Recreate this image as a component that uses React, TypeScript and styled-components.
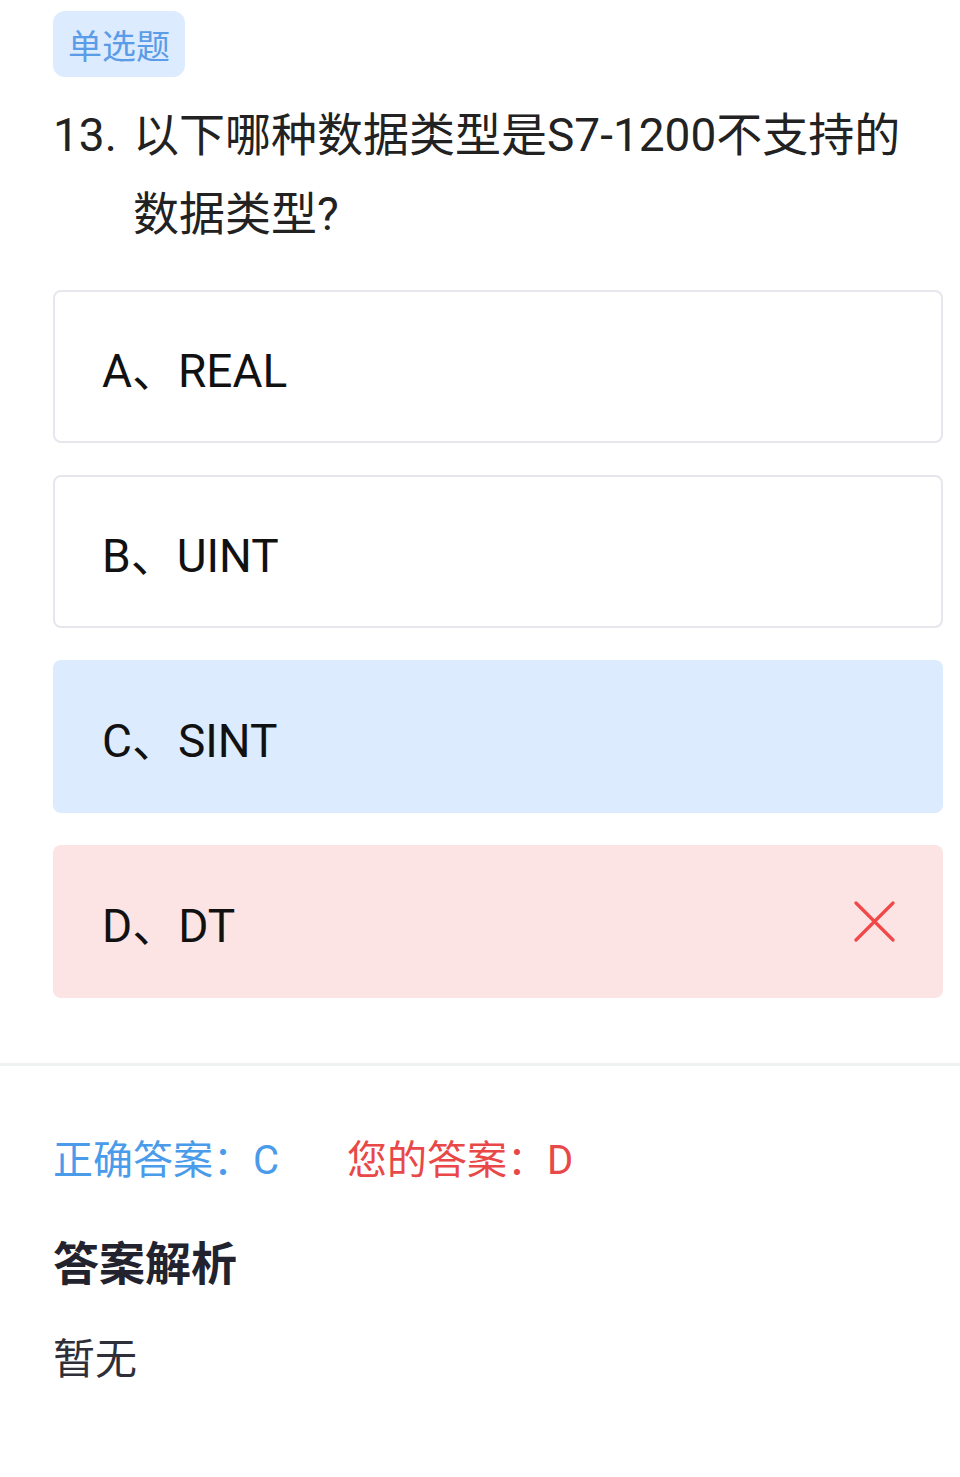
import React from "react";
import styled, { createGlobalStyle } from "styled-components";

const GlobalStyle = createGlobalStyle`
  html, body {
    margin: 0;
    padding: 0;
    background: #ffffff;
  }
  body {
    font-family: Roboto, "Noto Sans CJK SC", sans-serif;
    color: #1a1a1a;
  }
`;

const Page = styled.div`
  width: 960px;
  min-height: 1477px;
  background: #fff;
`;

const QuestionSection = styled.div`
  padding: 11px 17px 65px 53px;
`;

const TypeTag = styled.div`
  display: inline-flex;
  align-items: center;
  height: 66px;
  padding: 0 15px;
  border-radius: 12px;
  background: #dcebfd;
  color: #5b9ce8;
  font-size: 34px;
`;

const Title = styled.div`
  display: flex;
  margin-top: 19px;
  padding-right: 26px;
  font-size: 46px;
  line-height: 79px;
  color: #222;
`;

const Num = styled.span`
  flex: 0 0 80px;
`;

const TitleText = styled.span`
  flex: 1;
`;

const Options = styled.div`
  display: flex;
  flex-direction: column;
  gap: 32px;
  margin-top: 36px;
`;

type Status = "normal" | "correct" | "wrong";

const Option = styled.div<{ $status: Status }>`
  display: flex;
  align-items: center;
  justify-content: space-between;
  height: 153px;
  box-sizing: border-box;
  padding: 0 46px 0 47px;
  border-radius: 8px;
  border: 2px solid
    ${(p) => (p.$status === "normal" ? "#e6e6ec" : "transparent")};
  background: ${(p) =>
    p.$status === "correct"
      ? "#dcebfd"
      : p.$status === "wrong"
      ? "#fce3e4"
      : "#fff"};
  font-size: 46px;
  color: #111;
`;

const OptionText = styled.span`
  padding-top: 1px;
`;

const Divider = styled.div`
  height: 3px;
  background: #eef2f3;
`;

const ResultSection = styled.div`
  padding: 66px 53px 0;
`;

const AnswerRow = styled.div`
  display: flex;
  gap: 68px;
  font-size: 40px;
  line-height: 58px;
`;

const Answer = styled.span<{ $color: string }>`
  color: ${(p) => p.$color};
`;

const SubTitle = styled.div`
  margin-top: 42px;
  font-size: 46px;
  font-weight: 700;
  color: #23232f;
  line-height: 64px;
`;

const Analysis = styled.div`
  margin-top: 34px;
  font-size: 42px;
  line-height: 60px;
  color: #2f2f3a;
`;

const CrossIcon = () => (
  <svg width="42" height="42" viewBox="0 0 42 42">
    <path
      d="M3 2 L40 39 M40 2 L3 39"
      stroke="#f04848"
      strokeWidth="3.2"
      strokeLinecap="round"
    />
  </svg>
);

const options: { key: string; text: string; status: Status }[] = [
  { key: "A", text: "REAL", status: "normal" },
  { key: "B", text: "UINT", status: "normal" },
  { key: "C", text: "SINT", status: "correct" },
  { key: "D", text: "DT", status: "wrong" },
];

export default function App() {
  return (
    <Page>
      <GlobalStyle />
      <QuestionSection>
        <TypeTag>单选题</TypeTag>
        <Title>
          <Num>13.</Num>
          <TitleText>以下哪种数据类型是S7-1200不支持的数据类型?</TitleText>
        </Title>
        <Options>
          {options.map((o) => (
            <Option key={o.key} $status={o.status}>
              <OptionText>
                {o.key}、{o.text}
              </OptionText>
              {o.status === "wrong" && <CrossIcon />}
            </Option>
          ))}
        </Options>
      </QuestionSection>
      <Divider />
      <ResultSection>
        <AnswerRow>
          <Answer $color="#4a9be9">正确答案：C</Answer>
          <Answer $color="#e94848">您的答案：D</Answer>
        </AnswerRow>
        <SubTitle>答案解析</SubTitle>
        <Analysis>暂无</Analysis>
      </ResultSection>
    </Page>
  );
}
